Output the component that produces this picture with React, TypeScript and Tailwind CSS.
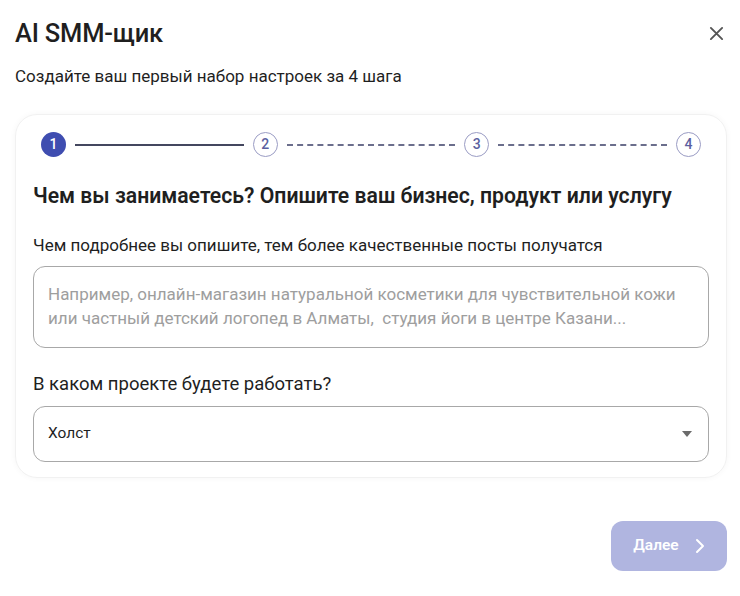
import React from 'react';

const font = { fontFamily: 'Roboto, "Noto Sans", sans-serif' };

const StepCircle: React.FC<{ n: number; active?: boolean }> = ({ n, active }) => (
  <div
    className={`flex-shrink-0 h-[25px] w-[25px] rounded-full flex items-center justify-center text-[14px] font-medium ${
      active ? 'bg-[#3f4db0] text-white' : 'border-[1.5px] border-[#9a9cc4] text-[#5b5fa0] bg-white'
    }`}
  >
    {n}
  </div>
);

const Line: React.FC<{ solid?: boolean }> = ({ solid }) => (
  <div className="flex-1 mx-[9px]">
    {solid ? (
      <div className="h-[2px] bg-[#44475f]" />
    ) : (
      <div className="border-t-[2px] border-dashed border-[#6b6e8c]" />
    )}
  </div>
);

export default function App() {
  return (
    <div className="w-[740px] h-[596px] bg-white relative" style={font}>
      <div className="flex items-center justify-between pl-[15px] pr-[16px] pt-[18px]">
        <h1 className="text-[25.5px] leading-[30px] font-medium text-[#1f1f1f] tracking-[-0.2px]">AI SMM-щик</h1>
        <svg width="15" height="15" viewBox="0 0 16 16">
          <path d="M2 2 L14 14 M14 2 L2 14" stroke="#555" strokeWidth="2" strokeLinecap="round" />
        </svg>
      </div>
      <p className="pl-[15px] mt-[17px] text-[17px] leading-[22px] text-[#1f1f1f]">
        Создайте ваш первый набор настроек за 4 шага
      </p>

      <div className="mx-[15px] mt-[27px] w-[712px] rounded-[22px] border border-[#f1f1f1] shadow-[0_0_6px_rgba(0,0,0,0.04)] px-[17px] pt-[17px] pb-[15px]">
        <div className="flex items-center pl-[8px] pr-[8px]">
          <StepCircle n={1} active />
          <Line solid />
          <StepCircle n={2} />
          <Line />
          <StepCircle n={3} />
          <Line />
          <StepCircle n={4} />
        </div>

        <h2 className="mt-[25px] text-[21.2px] leading-[28px] font-semibold text-[#1f1f1f]">
          Чем вы занимаетесь? Опишите ваш бизнес, продукт или услугу
        </h2>

        <p className="mt-[24px] text-[17px] leading-[22px] text-[#1f1f1f]">
          Чем подробнее вы опишите, тем более качественные посты получатся
        </p>

        <div className="mt-[10px] h-[82px] rounded-[12px] border border-[#a8a8a8] px-[14px] pt-[15px] text-[17px] leading-[24px] text-[#9e9e9e]">
          <div>Например, онлайн-магазин натуральной косметики для чувствительной кожи</div>
          <div>или частный детский логопед в Алматы,&nbsp; студия йоги в центре Казани...</div>
        </div>

        <p className="mt-[25px] text-[18.5px] leading-[22px] text-[#1f1f1f]">В каком проекте будете работать?</p>

        <div className="mt-[11px] h-[56px] rounded-[12px] border border-[#a8a8a8] flex items-center justify-between pl-[14px] pr-[16px]">
          <span className="text-[15.5px] text-[#1f1f1f]">Холст</span>
          <svg width="10" height="6" viewBox="0 0 10 6">
            <path d="M0 0 L10 0 L5 6 Z" fill="#6b6b6b" />
          </svg>
        </div>
      </div>

      <div className="flex justify-end pr-[13px] mt-[43px]">
        <button className="w-[116px] h-[50px] rounded-[12px] bg-[#b0b5e0] flex items-center justify-center gap-[16px] text-white text-[15.5px] font-semibold">
          <span>Далее</span>
          <svg width="10" height="16" viewBox="0 0 10 16">
            <path d="M2 2 L8 8 L2 14" stroke="white" strokeWidth="2" fill="none" strokeLinecap="round" strokeLinejoin="round" />
          </svg>
        </button>
      </div>
    </div>
  );
}
